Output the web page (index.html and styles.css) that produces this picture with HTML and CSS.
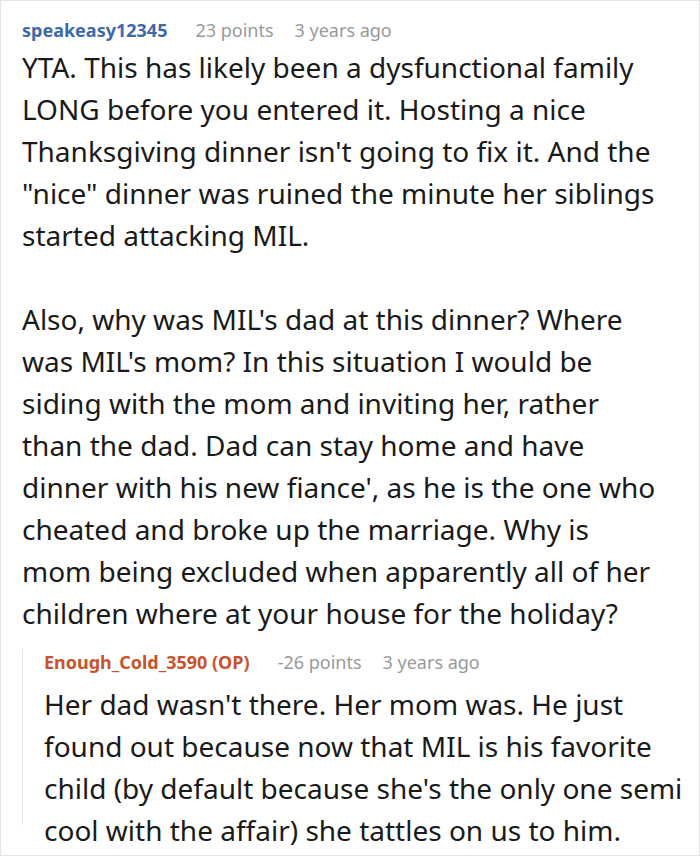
FILE: index.html
```html
<!DOCTYPE html>
<html>
<head>
<meta charset="utf-8">
<link rel="stylesheet" href="styles.css">
</head>
<body>
<div class="comment">
  <div class="meta">
    <span class="user">speakeasy12345</span>
    <span class="points">23 points</span>
    <span class="time">3 years ago</span>
  </div>
  <div class="body">
    <p>YTA. This has likely been a dysfunctional family<br>LONG before you entered it. Hosting a nice<br>Thanksgiving dinner isn't going to fix it. And the<br>"nice" dinner was ruined the minute her siblings<br>started attacking MIL.</p>
    <p>Also, why was MIL's dad at this dinner? Where<br>was MIL's mom? In this situation I would be<br>siding with the mom and inviting her, rather<br>than the dad. Dad can stay home and have<br>dinner with his new fiance', as he is the one who<br>cheated and broke up the marriage. Why is<br>mom being excluded when apparently all of her<br>children where at your house for the holiday?</p>
  </div>
  <div class="reply">
    <div class="meta reply-meta">
      <span class="user op">Enough_Cold_3590 (OP)</span>
      <span class="points">-26 points</span>
      <span class="time">3 years ago</span>
    </div>
    <div class="body reply-body">
      <p>Her dad wasn't there. Her mom was. He just<br>found out because now that MIL is his favorite<br>child (by default because she's the only one semi<br>cool with the affair) she tattles on us to him.</p>
    </div>
  </div>
</div>
</body>
</html>
```
FILE: styles.css
```css
html, body {
  margin: 0;
  padding: 0;
  background: #fff;
}
.comment {
  box-sizing: border-box;
  width: 700px;
  height: 856px;
  border: 1px solid #e4e4e4;
  padding: 16px 21px 0 21px;
  font-family: "Noto Sans", "Open Sans", sans-serif;
  color: #1a1a1a;
  overflow: hidden;
}
.meta {
  display: flex;
  align-items: center;
  line-height: 26px;
  font-size: 18px;
  margin-bottom: 3px;
  white-space: nowrap;
}
.user {
  font-weight: 700;
  color: #3d69aa;
  margin-right: 28px;
}
.user.op {
  color: #c8532b;
  margin-right: 28px;
}
.points,
.time {
  color: #999;
}
.points {
  margin-right: 21px;
}
.body {
  font-size: 28px;
  line-height: 42px;
  white-space: nowrap;
}
.body p {
  margin: 0 0 42px 0;
}
.body p:last-child {
  margin-bottom: 0;
}
.reply {
  margin-top: 25px;
  border-left: 1px solid #e2e2e2;
  padding-left: 21px;
  height: 176px;
}
.reply-meta {
  margin-top: -10px;
  margin-bottom: 8px;
}
```
